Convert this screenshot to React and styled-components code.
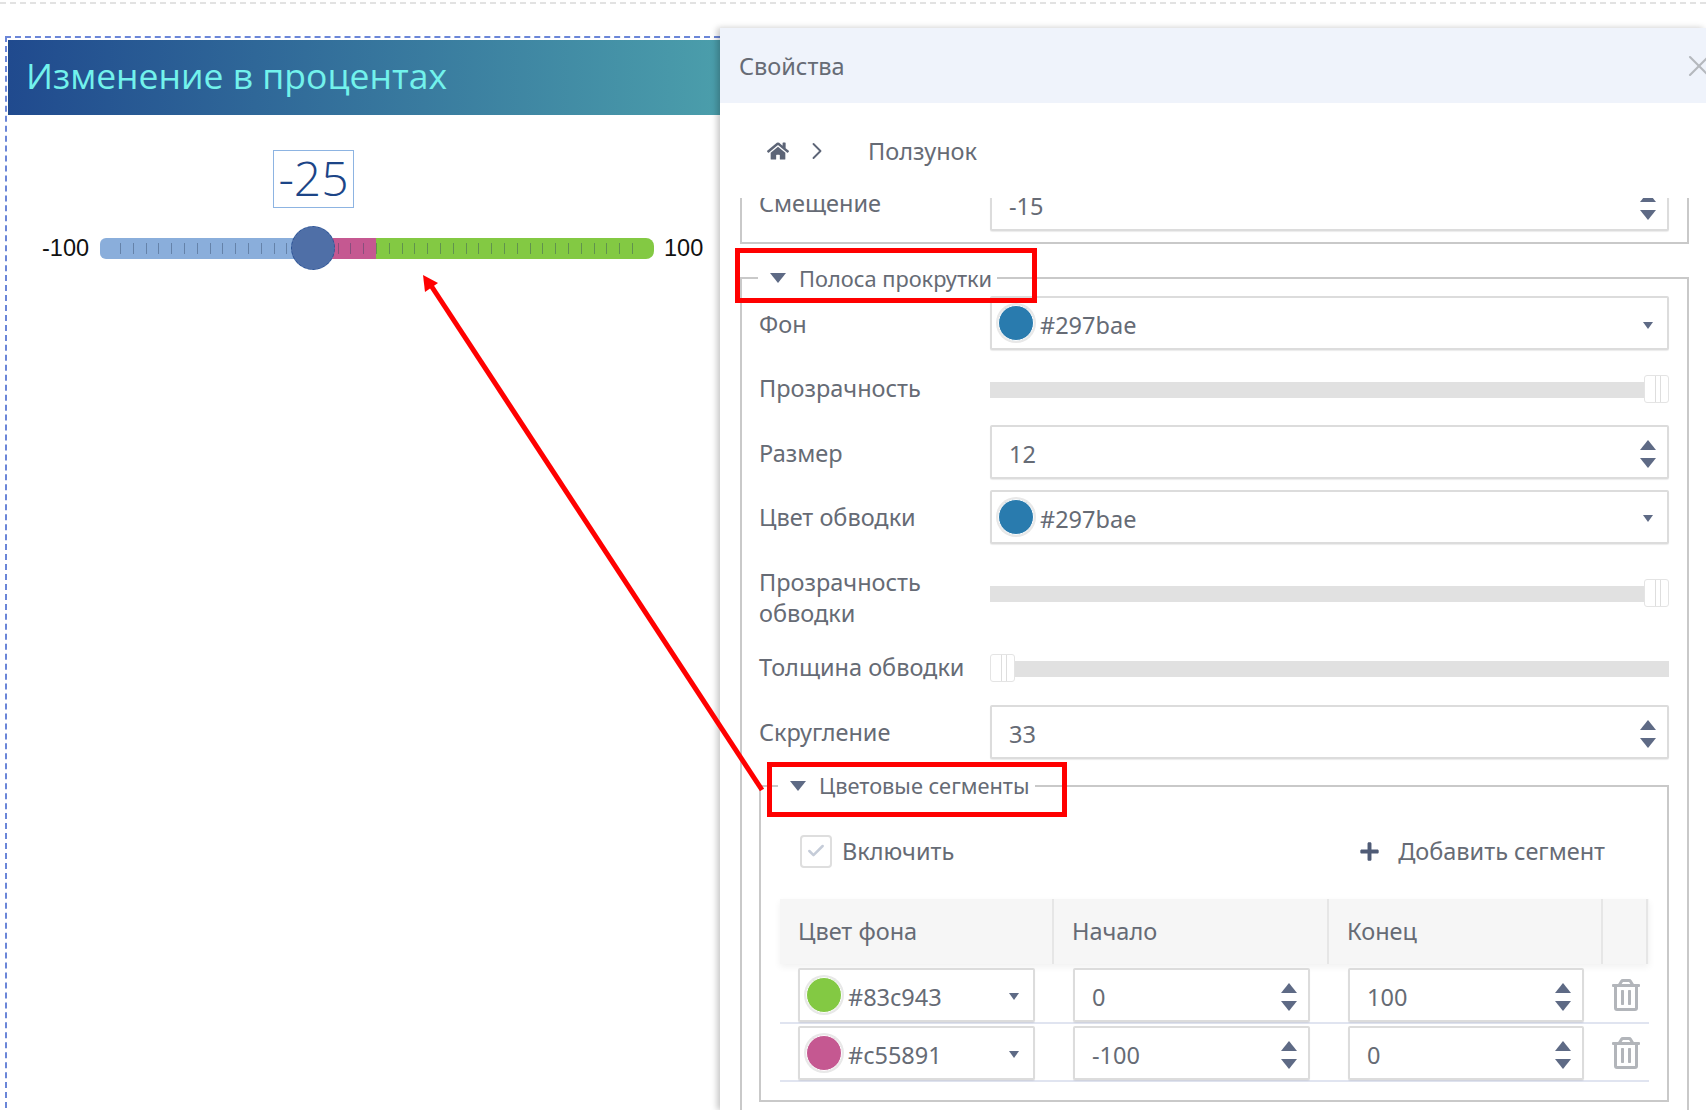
import { createGlobalStyle, styled } from 'styled-components'
import { FaHome, FaPlus, FaRegTrashAlt } from 'react-icons/fa'
import { Check, ChevronRight, X } from 'lucide-react'

const GlobalStyle = createGlobalStyle`
  html, body {
    margin: 0;
    padding: 0;
    background: #fff;
  }
  * {
    box-sizing: border-box;
  }
`

const Page = styled.div`
  position: relative;
  width: 1706px;
  height: 1110px;
  overflow: hidden;
  background: #fff;
  color: #666b75;
  font-family: "Noto Sans", sans-serif;
  font-size: 23.5px;
`

const TopRule = styled.div`
  margin-top: 2px;
  border-top: 2px dashed #e2e2e2;
`

const Workspace = styled.div`
  display: flex;
  align-items: flex-start;
  margin-top: 24px;
  height: 1082px;
`

const Widget = styled.section`
  flex: none;
  width: 715px;
  height: 100%;
  margin: 8px 0 0 5px;
  padding: 2px 0 0 1px;
  border-top: 2px dashed #6b86d8;
  border-left: 2px dashed #6b86d8;
`

const WidgetHeader = styled.header`
  display: flex;
  align-items: center;
  height: 75px;
  padding: 0 0 6px 18px;
  background: linear-gradient(90deg, #204a8e 0%, #4b9eab 100%);
  color: #72f2ec;
  font-family: "Open Sans", sans-serif;
  font-size: 35.5px;
`

const ValueBox = styled.div`
  display: flex;
  align-items: center;
  justify-content: center;
  width: 81px;
  height: 58px;
  margin: 35px 0 0 265px;
  padding-bottom: 4px;
  border: 1px solid #8db4e2;
  color: #1c4587;
  font-family: "Open Sans", sans-serif;
  font-size: 48px;
  font-weight: 300;
`

const SliderRow = styled.div`
  display: flex;
  align-items: center;
  height: 44px;
  margin-top: 18px;
  padding-left: 34px;
`

const EndLabel = styled.span`
  flex: none;
  width: ${(p) => p.$width}px;
  color: #111;
  font-family: "Liberation Sans", sans-serif;
  font-size: 23.5px;
`

const Track = styled.div`
  position: relative;
  display: flex;
  flex: none;
  width: 554px;
  height: 21px;
  margin-right: 10px;
  border-radius: 6px;

  &::after {
    content: '';
    position: absolute;
    left: 20px;
    right: 18px;
    top: 5px;
    bottom: 5px;
    background: repeating-linear-gradient(
      90deg,
      rgba(45, 65, 95, 0.4) 0,
      rgba(45, 65, 95, 0.4) 1px,
      transparent 1px,
      transparent 12.8px
    );
  }
`

const Segment = styled.div`
  width: ${(p) => p.$width}px;
  background: ${(p) => p.$color};

  &:first-child {
    border-radius: 6px 0 0 6px;
  }
  &:last-of-type {
    border-radius: 0 8px 8px 0;
  }
`

const Thumb = styled.span`
  position: absolute;
  z-index: 1;
  left: 191px;
  top: -12px;
  width: 44px;
  height: 44px;
  border-radius: 50%;
  background: #4f6fa7;
  border: 1px dashed #2a5296;
`

const Panel = styled.aside`
  position: relative;
  z-index: 2;
  flex: 1;
  height: 100%;
  min-width: 0;
  background: #fff;
  box-shadow: -3px 0 6px rgba(0, 0, 0, 0.22);
`

const PanelHeader = styled.header`
  display: flex;
  align-items: center;
  justify-content: space-between;
  height: 75px;
  padding-left: 19px;
  background: #eff3fb;
  overflow: hidden;

  svg {
    flex: none;
    margin-right: -11px;
    color: #b5b8bd;
  }
`

const Breadcrumb = styled.nav`
  display: flex;
  align-items: center;
  height: 95px;
  padding-left: 47px;

  span {
    margin-left: 37px;
  }
  svg {
    color: #5d6577;
  }
  svg:nth-child(2) {
    margin-left: 14px;
  }
`

const Scroller = styled.div`
  height: 912px;
  padding: 0 17px 0 20px;
  overflow: hidden;
`

const Group = styled.fieldset`
  min-width: 0;
  margin: ${(p) => p.$margin || 0};
  padding: ${(p) => p.$padding || 0};
  border: 2px solid #c9c9c9;
`

const ClippedGroup = styled(Group)`
  border-top: 0;
  margin-top: -24px;
  padding: 0 18px 11px 17px;
`

const Legend = styled.legend`
  position: relative;
  display: flex;
  align-items: center;
  gap: 13px;
  height: 30px;
  margin-left: ${(p) => p.$offset}px;
  padding: 0 5px 0 12px;
  font-size: 21.8px;
`

const Callout = styled.div`
  position: absolute;
  left: ${(p) => p.$left}px;
  top: ${(p) => p.$top}px;
  width: ${(p) => p.$width}px;
  height: 55px;
  border: 5px solid #f00;
`

const Triangle = styled.i`
  display: block;
  flex: none;
  width: 0;
  height: 0;
  border-left: ${(p) => p.$size / 2}px solid transparent;
  border-right: ${(p) => p.$size / 2}px solid transparent;
  border-top: ${(p) => (p.$up ? 0 : `${p.$height}px solid #5e6a85`)};
  border-bottom: ${(p) => (p.$up ? `${p.$height}px solid #5e6a85` : 0)};
`

const Rows = styled.div`
  display: grid;
  grid-template-columns: 231px 1fr;
  grid-auto-rows: minmax(54px, auto);
  row-gap: 10.6px;
  padding-top: 3px;
  align-items: center;
`

const Label = styled.label`
  padding: ${(p) => (p.$tall ? '13px 0 0' : '2px 0 0')};
  padding-bottom: ${(p) => (p.$raised ? '4px' : undefined)};
  line-height: 31px;
`

const Control = styled.div`
  display: flex;
  align-items: center;
  justify-content: space-between;
  height: 54px;
  padding: ${(p) => (p.$swatch ? '4px 14px 0 6px' : '4px 11px 0 17px')};
  border: 2px solid #dcdcdc;
  border-radius: 2px;
  background: #fff;
  box-shadow: 0 1px 1px rgba(0, 0, 0, 0.08);
`

const SwatchValue = styled.span`
  display: flex;
  align-items: center;
  gap: 6px;
`

const Swatch = styled.i`
  display: block;
  width: 36px;
  height: 36px;
  margin-top: -4px;
  border-radius: 50%;
  background: ${(p) => p.$color};
  box-shadow: 0 0 0 2px #e8e8e8;
  border: 1px solid #fff;
`

const Spinner = styled.span`
  display: flex;
  flex-direction: column;
  gap: 8px;
`

const SliderField = styled.div`
  position: relative;
  height: 16px;
  margin-top: 4px;
  background: #e1e1e1;
`

const SliderHandle = styled.div`
  position: absolute;
  top: -7px;
  ${(p) => (p.$end ? 'right: 0;' : 'left: 0;')}
  width: 25px;
  height: 28px;
  border: 1px solid #e4e4e4;
  border-radius: 3px;
  background: repeating-linear-gradient(90deg, #fff 0, #fff 4px, #dedede 4px, #dedede 5px) 6px 0 / 13px 100% no-repeat #fff;
`

const SegmentTools = styled.div`
  display: flex;
  align-items: center;
  justify-content: space-between;
  height: 33px;
  margin: 34px 0 31px;
  padding: 0 44px 0 20px;
`

const Toggle = styled.label`
  display: flex;
  align-items: center;
  gap: 10px;
`

const CheckBox = styled.span`
  display: flex;
  align-items: center;
  justify-content: center;
  width: 32px;
  height: 33px;
  border: 2px solid #dedede;
  border-radius: 4px;
  color: #c5ccd8;
`

const AddButton = styled.button`
  display: flex;
  align-items: center;
  gap: 18px;
  padding: 0;
  border: 0;
  background: none;
  color: inherit;
  font: inherit;

  svg {
    color: #4f5b76;
  }
`

const columns = '274px 275px 274px 45px'

const TableHead = styled.div`
  display: grid;
  grid-template-columns: ${columns};
  height: 65px;
  margin-bottom: 2px;
  background: #f6f6f6;
  box-shadow: 0 3px 7px rgba(0, 0, 0, 0.06);
`

const HeadCell = styled.div`
  display: flex;
  align-items: center;
  padding-left: 18px;
  border-right: 2px solid #e6e6e6;
`

const TableRow = styled.div`
  display: grid;
  grid-template-columns: ${columns};
  padding-top: 2px;
  border-bottom: 2px solid #e0e4f0;
`

const Cell = styled.div`
  padding: 0 19px 0 ${(p) => p.$pad || 18}px;
`

const TrashCell = styled.div`
  display: flex;
  align-items: center;
  justify-content: center;
  color: #b2b5ba;
`

const ArrowLayer = styled.svg`
  position: absolute;
  z-index: 3;
  left: 0;
  top: 0;
  pointer-events: none;
`

function Stepper () {
  return (
    <Spinner>
      <Triangle $up $size={17} $height={10} />
      <Triangle $size={17} $height={10} />
    </Spinner>
  )
}

function NumberField ({ value }) {
  return (
    <Control>
      <span>{value}</span>
      <Stepper />
    </Control>
  )
}

function ColorField ({ color }) {
  return (
    <Control $swatch>
      <SwatchValue>
        <Swatch $color={color} />
        {color}
      </SwatchValue>
      <Triangle $size={10} $height={7} />
    </Control>
  )
}

function RangeField ({ end }) {
  return (
    <SliderField>
      <SliderHandle $end={end} />
    </SliderField>
  )
}

function SegmentRow ({ color, start, stop }) {
  return (
    <TableRow>
      <Cell><ColorField color={color} /></Cell>
      <Cell $pad={19}><NumberField value={start} /></Cell>
      <Cell $pad={19}><NumberField value={stop} /></Cell>
      <TrashCell><FaRegTrashAlt size={32} /></TrashCell>
    </TableRow>
  )
}

export default function App () {
  return (
    <Page>
      <GlobalStyle />
      <TopRule />
      <Workspace>
        <Widget>
          <WidgetHeader>Изменение в процентах</WidgetHeader>
          <ValueBox>-25</ValueBox>
          <SliderRow>
            <EndLabel $width={58}>-100</EndLabel>
            <Track>
              <Segment $width={213} $color='#8aaedb' />
              <Segment $width={63} $color='#c55891' />
              <Segment $width={278} $color='#83c943' />
              <Thumb />
            </Track>
            <EndLabel $width={50}>100</EndLabel>
          </SliderRow>
        </Widget>
        <Panel>
          <PanelHeader>
            Свойства
            <X size={36} strokeWidth={1.4} />
          </PanelHeader>
          <Breadcrumb>
            <FaHome size={22} />
            <ChevronRight size={28} strokeWidth={1.6} />
            <span>Ползунок</span>
          </Breadcrumb>
          <Scroller>
            <ClippedGroup>
              <Rows>
                <Label $raised>Смещение</Label>
                <NumberField value='-15' />
              </Rows>
            </ClippedGroup>
            <Group $margin='19px 0 0' $padding='0 18px 40px 17px'>
              <Legend $offset={-1}>
                <Triangle $size={17} $height={10} />
                Полоса прокрутки
                <Callout $left={-23} $top={-15} $width={302} />
              </Legend>
              <Rows>
                <Label>Фон</Label>
                <ColorField color='#297bae' />
                <Label>Прозрачность</Label>
                <RangeField end />
                <Label>Размер</Label>
                <NumberField value='12' />
                <Label>Цвет обводки</Label>
                <ColorField color='#297bae' />
                <Label $tall>Прозрачность<br />обводки</Label>
                <RangeField end />
                <Label>Толщина обводки</Label>
                <RangeField />
                <Label>Скругление</Label>
                <NumberField value='33' />
              </Rows>
              <Group $margin='12px 0 0 0' $padding='0 18px 18px 19px'>
                <Legend $offset={-2}>
                  <Triangle $size={17} $height={10} />
                  Цветовые сегменты
                  <Callout $left={-11} $top={-9} $width={300} />
                </Legend>
                <SegmentTools>
                  <Toggle>
                    <CheckBox><Check size={20} strokeWidth={3} /></CheckBox>
                    Включить
                  </Toggle>
                  <AddButton>
                    <FaPlus size={21} />
                    Добавить сегмент
                  </AddButton>
                </SegmentTools>
                <TableHead>
                  <HeadCell>Цвет фона</HeadCell>
                  <HeadCell>Начало</HeadCell>
                  <HeadCell>Конец</HeadCell>
                  <HeadCell />
                </TableHead>
                <SegmentRow color='#83c943' start='0' stop='100' />
                <SegmentRow color='#c55891' start='-100' stop='0' />
              </Group>
            </Group>
          </Scroller>
        </Panel>
      </Workspace>
      <ArrowLayer width='1706' height='1110' viewBox='0 0 1706 1110'>
        <line x1='762' y1='790' x2='430' y2='284' stroke='#f00' strokeWidth='5' />
        <polygon points='423,275 438,283 425,292' fill='#f00' />
      </ArrowLayer>
    </Page>
  )
}
